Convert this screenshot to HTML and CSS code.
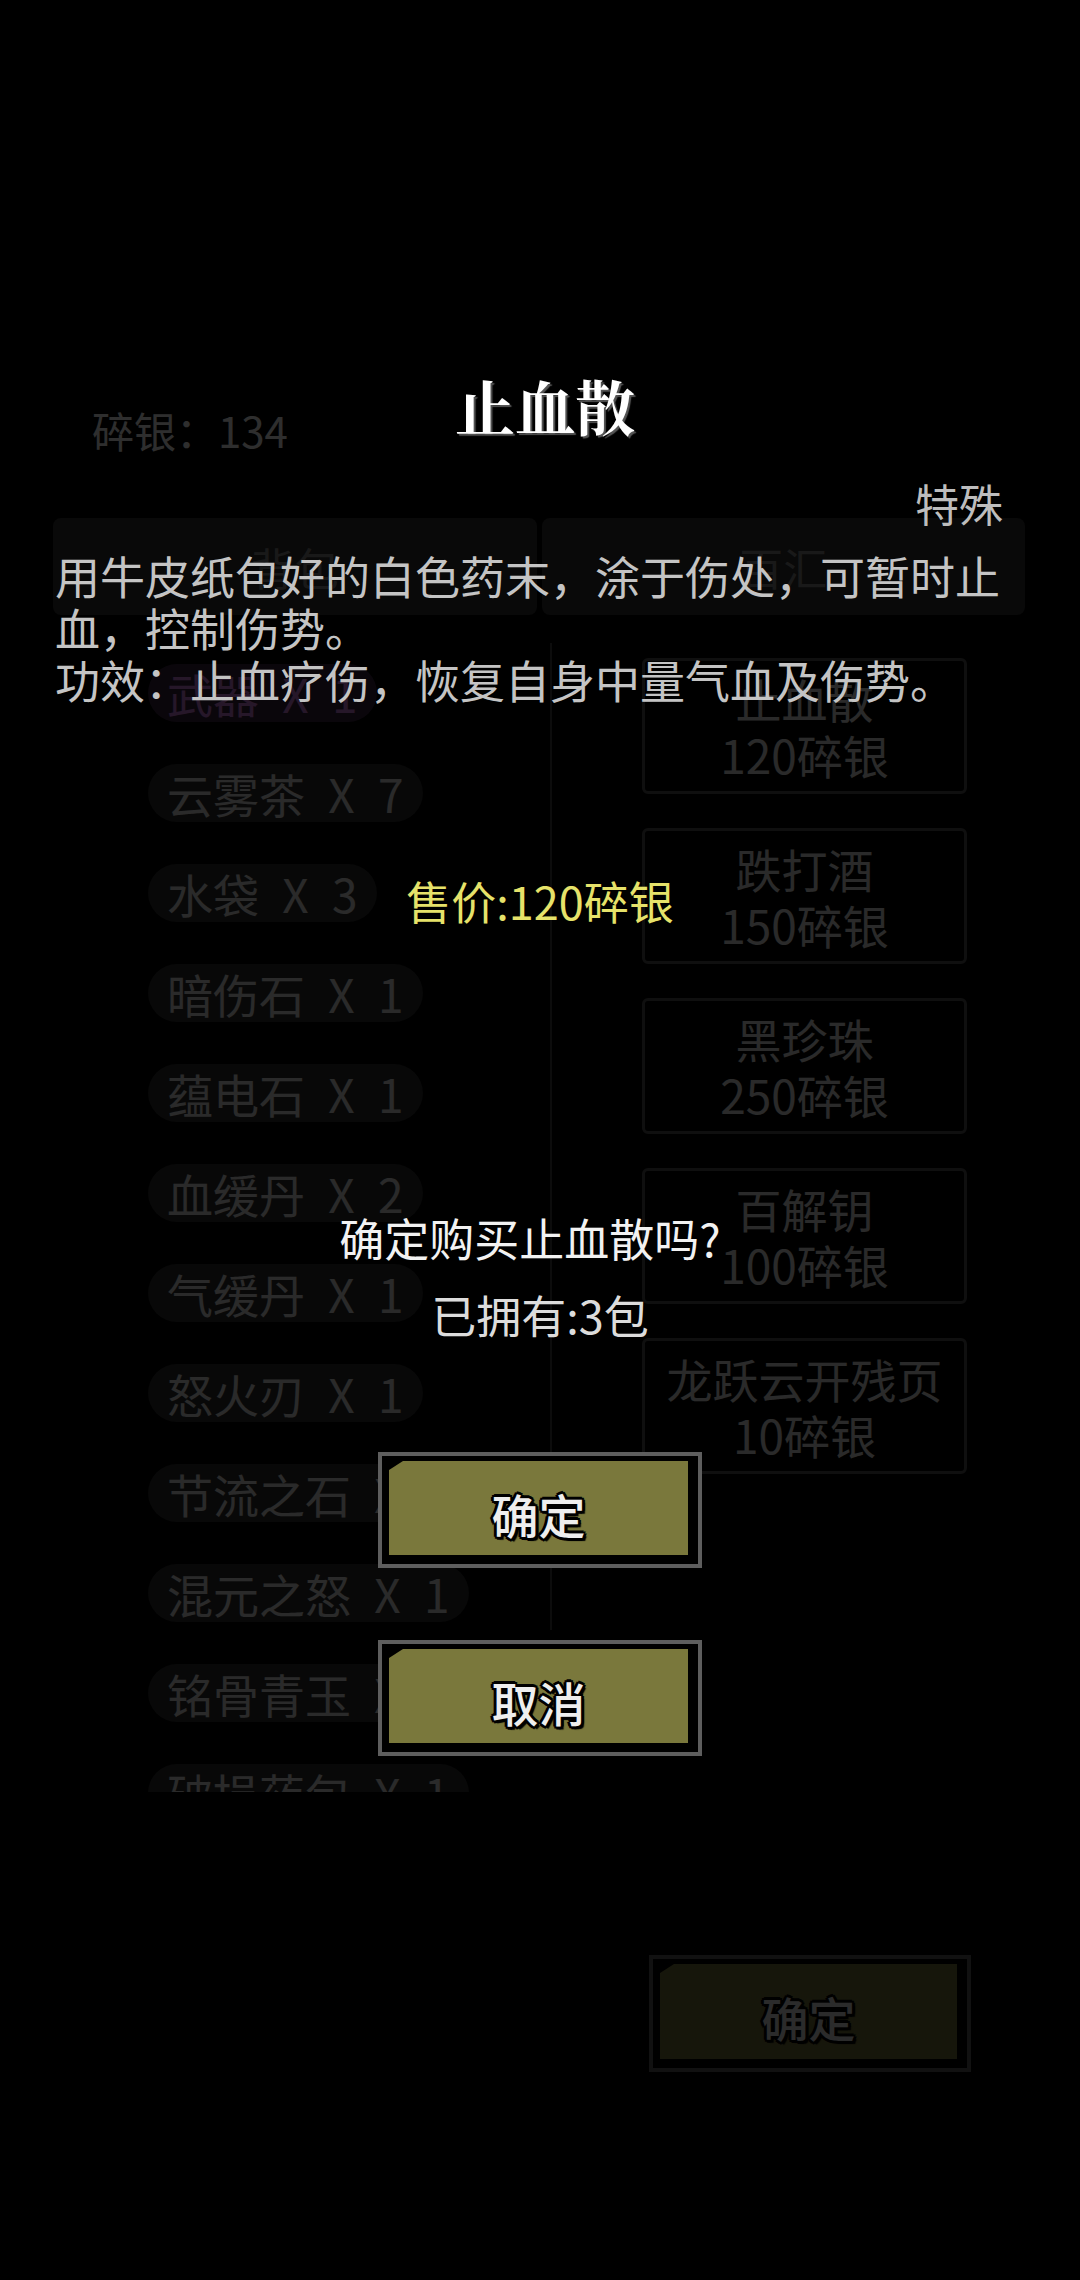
FILE: index.html
```html
<!DOCTYPE html>
<html lang="zh-CN">
<head>
<meta charset="utf-8">
<title>止血散</title>
<link rel="stylesheet" href="styles.css">
</head>
<body>
<div class="shop">
  <div class="wallet">碎银：134</div>
  <div class="tabs">
    <div class="tab">背包</div>
    <div class="tab">百汇</div>
  </div>
  <div class="content">
    <div class="bag">
      <div class="item weapon"><span>武器 X 1</span></div>
      <div class="item"><span>云雾茶 X 7</span></div>
      <div class="item"><span>水袋 X 3</span></div>
      <div class="item"><span>暗伤石 X 1</span></div>
      <div class="item"><span>蕴电石 X 1</span></div>
      <div class="item"><span>血缓丹 X 2</span></div>
      <div class="item"><span>气缓丹 X 1</span></div>
      <div class="item"><span>怒火刃 X 1</span></div>
      <div class="item"><span>节流之石 X 1</span></div>
      <div class="item"><span>混元之怒 X 1</span></div>
      <div class="item"><span>铭骨青玉 X 1</span></div>
      <div class="item"><span>破损药包 X 1</span></div>
    </div>
    <div class="divider"></div>
    <div class="goods">
      <div class="good"><div>止血散</div><div>120碎银</div></div>
      <div class="good"><div>跌打酒</div><div>150碎银</div></div>
      <div class="good"><div>黑珍珠</div><div>250碎银</div></div>
      <div class="good"><div>百解钥</div><div>100碎银</div></div>
      <div class="good"><div>龙跃云开残页</div><div>10碎银</div></div>
    </div>
  </div>
  <div class="bottom-bar">
    <div class="btn btn-wide"><div class="btn-face">确定</div></div>
  </div>
</div>

<div class="dialog">
  <div class="title">止血散</div>
  <div class="category">特殊</div>
  <div class="desc">用牛皮纸包好的白色药末，涂于伤处，可暂时止血，控制伤势。<br>功效：止血疗伤，恢复自身中量气血及伤势。</div>
  <div class="price">售价:120碎银</div>
  <div class="question">确定购买止血散吗?</div>
  <div class="owned">已拥有:3包</div>
  <div class="btn dialog-btn"><div class="btn-face">确定</div></div>
  <div class="btn dialog-btn second"><div class="btn-face">取消</div></div>
</div>
</body>
</html>
```

FILE: styles.css
```css
* {
  box-sizing: border-box;
  margin: 0;
  padding: 0;
}

html, body {
  width: 1080px;
  height: 2280px;
  background: #000;
  overflow: hidden;
}

body {
  position: relative;
  font-family: "Noto Sans CJK SC", "Noto Sans", sans-serif;
}

/* ---------- background shop screen ---------- */
.shop {
  width: 1080px;
  height: 2280px;
}

.wallet {
  padding: 400px 0 0 92px;
  font-size: 42px;
  line-height: 60px;
  color: #fff;
}

.tabs {
  display: flex;
  gap: 5px;
  width: 972px;
  height: 97px;
  margin: 58px 0 0 53px;
}

.tab {
  flex: 1;
  display: flex;
  align-items: center;
  justify-content: center;
  background: #333;
  border-radius: 8px;
  font-size: 44px;
  color: #8c8c8c;
}

.content {
  display: flex;
  height: 1149px;
  margin-top: 28px;
}

.bag {
  width: 550px;
  height: 1149px;
  overflow: hidden;
  padding-left: 148px;
}

.item {
  height: 100px;
  display: flex;
  align-items: center;
}

.item span {
  padding: 0 19px;
  border-radius: 30px;
  background: #2e2e2e;
  font-size: 46px;
  line-height: 58px;
  color: #e6e6e6;
  word-spacing: 13px;
  white-space: nowrap;
}

.item.weapon span {
  color: #d080e0;
  background: #3a2440;
}

.divider {
  width: 2px;
  height: 987px;
  background: #444;
}

.goods {
  display: flex;
  flex-direction: column;
  gap: 34px;
  padding: 15px 0 0 90px;
}

.good {
  width: 325px;
  height: 136px;
  display: flex;
  flex-direction: column;
  align-items: center;
  justify-content: center;
  border: 3px solid #555;
  border-radius: 6px;
  font-size: 46px;
  line-height: 56px;
  color: #e6e6e6;
  white-space: nowrap;
}

.bottom-bar {
  padding: 163px 0 0 649px;
}

/* ---------- shared olive button ---------- */
.btn {
  width: 324px;
  height: 116px;
  border: 4px solid #5e5e5e;
  background: #000;
  padding: 5px 10px 9px 7px;
}

.btn-wide {
  width: 322px;
  height: 117px;
}

.btn-face {
  height: 100%;
  display: flex;
  align-items: center;
  justify-content: center;
  padding-top: 10px;
  background: #7a783c;
  clip-path: polygon(0 9px, 14px 0, 100% 0, 100% 100%, 0 100%);
  font-size: 47px;
  font-weight: 500;
  color: #eeeeee;
  text-shadow:
    3px 0 0 #000, -3px 0 0 #000, 0 3px 0 #000, 0 -3px 0 #000,
    2px 2px 0 #000, -2px -2px 0 #000, 2px -2px 0 #000, -2px 2px 0 #000,
    3px 3px 1px #000;
}

/* ---------- purchase dialog (overlay) ---------- */
.dialog {
  position: absolute;
  inset: 0;
  display: flex;
  flex-direction: column;
  padding-top: 370px;
  background: rgba(0, 0, 0, 0.82);
}

.title {
  padding-left: 10px;
  text-align: center;
  font-family: "Noto Serif CJK SC", "Noto Sans CJK SC", serif;
  font-size: 60px;
  font-weight: bold;
  line-height: 70px;
  color: #fff;
  text-shadow: 2px 2px 1px #555;
}

.category {
  margin-top: 37px;
  padding-right: 77px;
  text-align: right;
  font-size: 44px;
  line-height: 52px;
  color: #bdbdbd;
}

.desc {
  margin-top: 21px;
  padding: 0 77px 0 55px;
  font-size: 45px;
  line-height: 52px;
  color: #c4c4c4;
}

.price {
  margin-top: 169px;
  text-align: center;
  font-size: 45px;
  line-height: 52px;
  color: #e6e26a;
}

.question {
  margin-top: 285px;
  padding-right: 20px;
  text-align: center;
  font-size: 45px;
  line-height: 52px;
  color: #f2f2f2;
}

.owned {
  margin-top: 25px;
  text-align: center;
  font-size: 45px;
  line-height: 52px;
  color: #dcdcdc;
}

.dialog-btn {
  margin: 111px auto 0;
}

.dialog-btn.second {
  margin-top: 72px;
}
```
